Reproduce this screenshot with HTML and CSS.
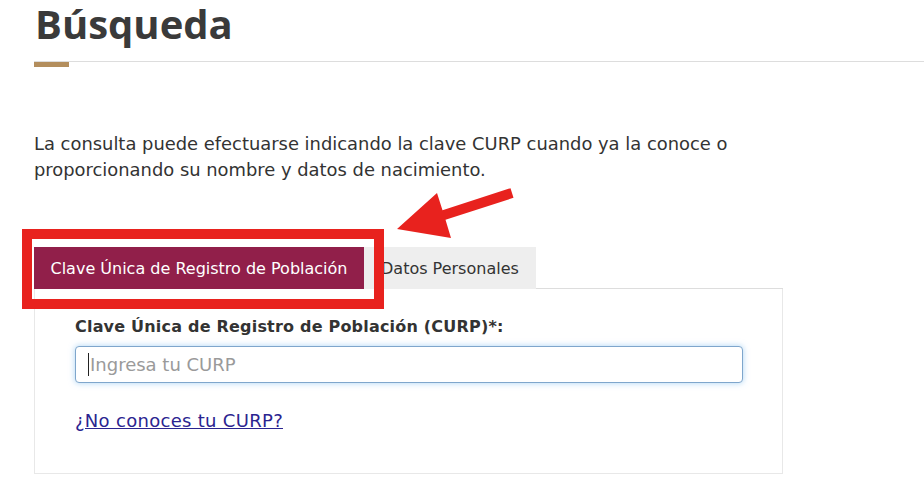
FILE: index.html
```html
<!DOCTYPE html>
<html lang="es">
<head>
<meta charset="utf-8">
<title>Búsqueda</title>
<link rel="stylesheet" href="styles.css">
</head>
<body>
<main class="page">
  <header class="heading">
    <h1 class="title">Búsqueda</h1>
    <div class="rule"></div>
    <div class="rule-accent"></div>
  </header>

  <p class="intro">La consulta puede efectuarse indicando la clave CURP cuando ya la conoce o<br>proporcionando su nombre y datos de nacimiento.</p>

  <div class="tabs-area">
    <nav class="tabs">
      <a class="tab tab-active">Clave Única de Registro de Población</a>
      <a class="tab">Datos Personales</a>
      <span class="tab-fill"></span>
    </nav>
    <section class="panel">
      <label class="field-label" for="curp">Clave Única de Registro de Población (CURP)*:</label>
      <div class="input-wrap">
        <input id="curp" class="input" type="text" placeholder="Ingresa tu CURP">
        <span class="caret"></span>
      </div>
      <a class="help-link" href="#">¿No conoces tu CURP?</a>
    </section>
  </div>

  <div class="highlight-box"></div>
  <svg class="arrow" width="130" height="65" viewBox="0 0 130 65" aria-hidden="true">
    <polygon points="7,49 47,13 52.5,30.3 120.5,8.2 123.5,17.8 55.5,39.8 61,58" fill="#e8221e"/>
  </svg>
</main>
</body>
</html>
```

FILE: styles.css
```css
* { box-sizing: border-box; }

html, body {
  margin: 0;
  padding: 0;
  background: #ffffff;
}

body {
  font-family: "DejaVu Sans", "Open Sans", sans-serif;
  color: #333333;
}

.page {
  position: relative;
  width: 924px;
  height: 481px;
  overflow: hidden;
  padding-left: 34px;
}

.heading {
  display: flex;
  flex-direction: column;
}

.title {
  margin: 0;
  font-family: "Open Sans", "DejaVu Sans", sans-serif;
  font-size: 40px;
  line-height: 48px;
  font-weight: 700;
  color: #3a3a3a;
  padding-left: 1px;
}

.rule {
  margin-top: 13px;
  height: 1px;
  background: #dddddd;
}

.rule-accent {
  width: 35px;
  height: 5px;
  background: #b38e5d;
}

.intro {
  margin: 64px 0 0 0;
  font-size: 17.9px;
  line-height: 26px;
  color: #333333;
}

.tabs-area {
  margin-top: 64px;
  width: 749px;
}

.tabs {
  display: flex;
  height: 42px;
}

.tab {
  display: flex;
  align-items: center;
  padding: 0 17px;
  font-size: 16px;
  color: #333333;
  background: #eeeeee;
  text-decoration: none;
}

.tab-active {
  justify-content: center;
  padding: 0;
  background: #911f4a;
  color: #ffffff;
  width: 330px;
}

.tab-fill {
  flex: 1;
  border-bottom: 1px solid #dddddd;
}

.panel {
  height: 185px;
  border: 1px solid #e8e8e8;
  border-top: none;
  padding: 27px 40px 0 40px;
  display: flex;
  flex-direction: column;
}

.field-label {
  font-size: 16px;
  font-weight: 700;
  letter-spacing: 0.2px;
  line-height: 22px;
  color: #333333;
}

.input-wrap {
  position: relative;
  margin-top: 8px;
  width: 668px;
}

.input {
  display: block;
  width: 100%;
  height: 37px;
  border: 1px solid #7fa6cc;
  border-radius: 4px;
  box-shadow: 0 0 6px rgba(102, 175, 233, 0.55);
  padding: 0 14px;
  font-family: "DejaVu Sans", "Open Sans", sans-serif;
  font-size: 18px;
  color: #333333;
  outline: none;
  background: #ffffff;
}

.input::placeholder {
  color: #9a9a9a;
}

.caret {
  position: absolute;
  left: 13px;
  top: 7px;
  width: 1px;
  height: 23px;
  background: #222222;
}

.help-link {
  margin-top: 27px;
  align-self: flex-start;
  font-size: 18px;
  letter-spacing: 0.3px;
  color: #2b2490;
  text-decoration: underline;
}

.highlight-box {
  position: absolute;
  left: 22px;
  top: 229px;
  width: 362px;
  height: 80px;
  border: 10px solid #e8221e;
}

.arrow {
  position: absolute;
  left: 390px;
  top: 180px;
}
```
